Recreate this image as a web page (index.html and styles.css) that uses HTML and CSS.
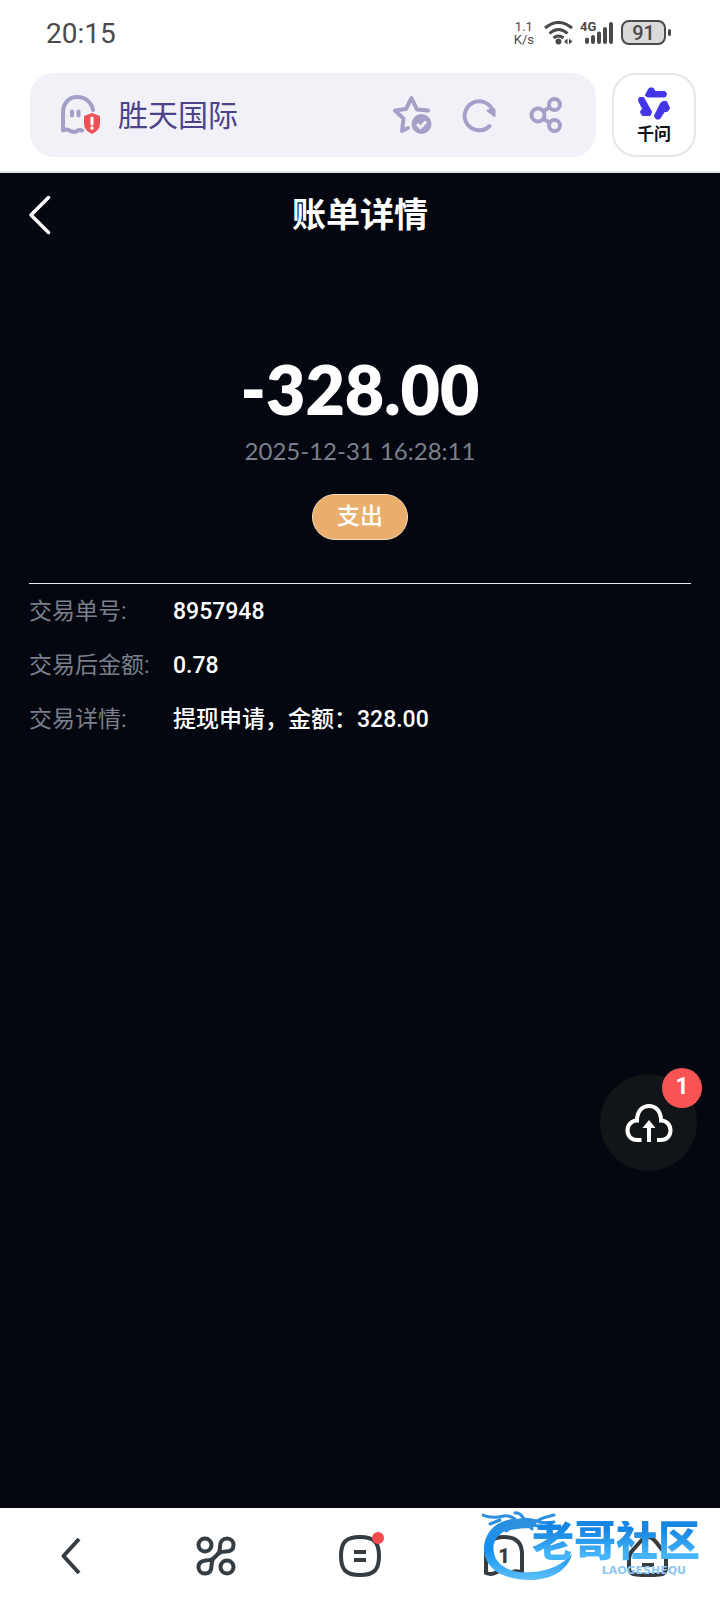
FILE: index.html
```html
<!DOCTYPE html>
<html lang="zh-CN">
<head>
<meta charset="utf-8">
<meta name="viewport" content="width=device-width, initial-scale=1">
<title>账单详情</title>
<link rel="stylesheet" href="styles.css">
</head>
<body>
<div class="status">
  <time class="clock">20:15</time>
  <div class="indicators">
    <div class="speed"><span>1.1</span><span>K/s</span></div>
    <svg class="wifi" width="30" height="24" viewBox="0 0 30 24" fill="none" stroke="#4a4a4a" stroke-width="3">
      <path d="M1 7Q14.500-4 28 7M5.500 12.500Q14.500 4.500 23.500 12.500M9.500 17Q14.500 13 19.500 17"/>
      <circle cx="14.500" cy="20.500" r="3" fill="#4a4a4a" stroke="none"/>
      <path d="M23.500 17.500v6l-3.500-3zM25 17.500v6l3.500-3z" fill="#4a4a4a" stroke="none"/>
    </svg>
    <div class="signal">
      <span class="net">4G</span>
      <svg width="34" height="24" viewBox="0 0 34 24" stroke="#4a4a4a" stroke-width="4" stroke-linecap="round">
        <path d="M7 18.500v2.500M13 16v5M19 12.500v8.500M25 8v13M31 3v18"/>
      </svg>
    </div>
    <div class="battery"><span class="level">91</span><span class="tip"></span></div>
  </div>
</div>

<header class="browser">
  <div class="address">
    <svg width="42" height="40" viewBox="0 0 42 40" fill="none">
      <path d="M34 15C32.500 7 26 2 18.500 2C9 2 4 9 4 18V35.500Q7 33.500 10.500 35.500Q15 38 18 36Q20 34.500 23 35.500" stroke="#a3a0c8" stroke-width="4" stroke-linecap="round" stroke-linejoin="round"/>
      <path d="M13 16.500v4M19.500 16.500v4" stroke="#a3a0c8" stroke-width="4" stroke-linecap="round"/>
      <path d="M33 18L41 21V29Q41 35 33 39Q25 35 25 29V21Z" fill="#ee5258"/>
      <path d="M33 23v6" stroke="#fff" stroke-width="3" stroke-linecap="round"/>
      <circle cx="33" cy="33" r="1.700" fill="#fff"/>
    </svg>
    <span class="site">胜天国际</span>
    <button class="tool" aria-label="收藏">
      <svg width="40" height="40" viewBox="0 0 40 40" fill="none">
        <path d="M36 15.500L25 14.500L19.500 3L14 14L3 15.500L11.500 23.500L10 36L16 33" stroke="#a5a0c8" stroke-width="4" stroke-linecap="round" stroke-linejoin="round"/>
        <circle cx="29.500" cy="29" r="10" fill="#a5a0c8"/>
        <path d="M25 29l3.500 3.500L34 26.500" stroke="#f2f1f8" stroke-width="3"/>
      </svg>
    </button>
    <button class="tool" aria-label="刷新">
      <svg width="40" height="40" viewBox="0 0 40 40" fill="none">
        <path d="M30.500 31A14.500 14.500 0 1 1 34 16.500" stroke="#a5a0c8" stroke-width="4" stroke-linecap="round"/>
        <path d="M28.500 15.500L35.500 14.500L35.500 21Z" fill="#a5a0c8" stroke="#a5a0c8" stroke-width="2" stroke-linejoin="round"/>
      </svg>
    </button>
    <button class="tool" aria-label="分享">
      <svg width="40" height="40" viewBox="0 0 40 40" fill="none" stroke="#a5a0c8" stroke-width="4">
        <circle cx="12" cy="20" r="6.500"/><circle cx="28.500" cy="9.500" r="5.500"/><circle cx="28.500" cy="30.500" r="5.500"/>
        <path d="M17.500 16l6-3.500M17.500 24l6 3.500"/>
      </svg>
    </button>
  </div>
  <button class="qianwen">
    <svg width="34" height="34" viewBox="0 0 34 34" fill="#4536e8" stroke="#4536e8" stroke-width="3" stroke-linejoin="round">
      <path d="M13 3L15.500 3L17.500 6.500H27.500L28.500 8L27.500 10H11L9.500 9Z"/>
      <path d="M3 12.500L6 12.500L13.500 26L12.500 28.500H6L4.500 26L7 23L2.500 14.500Z"/>
      <path d="M26.500 16.500L29 16.500L31.500 22L29.500 24.500H27L22 32H20L18.500 30L24.500 18Z"/>
    </svg>
    <span>千问</span>
  </button>
</header>

<main class="page">
  <div class="titlebar">
    <button class="back" aria-label="返回">
      <svg width="24" height="42" viewBox="0 0 24 42" fill="none" stroke="#fff" stroke-width="3.500" stroke-linecap="round" stroke-linejoin="round"><path d="M19.500 3.500L2 21L19.500 38.500"/></svg>
    </button>
    <h1 class="title">账单详情</h1>
  </div>
  <section class="summary">
    <p class="amount">-328.00</p>
    <time class="date">2025-12-31 16:28:11</time>
    <span class="kind">支出</span>
  </section>
  <dl class="details">
    <div class="row"><dt>交易单号:</dt><dd>8957948</dd></div>
    <div class="row"><dt>交易后金额:</dt><dd>0.78</dd></div>
    <div class="row"><dt>交易详情:</dt><dd>提现申请，金额：328.00</dd></div>
  </dl>
  <button class="upload" aria-label="上传">
    <svg width="48" height="40" viewBox="0 0 48 40" fill="none" stroke="#fff" stroke-width="4">
      <path d="M16.500 37H12C6.500 37 2.500 33 2.500 27.500C2.500 22 6.500 17.500 12 17.500C12 8.500 17 3 24 3C31 3 36 8.500 36 17.500C41.500 17.500 45.500 22 45.500 27.500C45.500 33 41.500 37 36 37H32"/>
      <path d="M24 39V24"/><path d="M24 17L30.500 25H17.500Z" fill="#fff" stroke="none"/>
    </svg>
    <span class="count">1</span>
  </button>
</main>

<nav class="bottom">
  <button class="item" aria-label="后退">
    <svg width="44" height="44" viewBox="0 0 44 44"><path d="M29 5L13.500 22L29 39"/></svg>
  </button>
  <button class="item" aria-label="应用">
    <svg width="44" height="44" viewBox="0 0 44 44">
      <circle cx="11" cy="11" r="6.500"/><circle cx="33" cy="33" r="6.500"/>
      <path d="M26 12C26 7.500 29 4.500 33 4.500C37 4.500 39.500 7.500 39.500 11C39.500 15 37 17.500 32 17.500C25 18 25 19 22 22C19 25 18 26 11.500 26.500C7 27 4.500 29 4.500 33C4.500 37 7.500 39.500 11 39.500C15 39.500 17.500 37 17.500 32C18 25 19 25 22 22C25 19 26 18 26 12Z"/>
    </svg>
  </button>
  <button class="item" aria-label="菜单">
    <svg width="44" height="44" viewBox="0 0 44 44"><path d="M22 3C36 3 41 8 41 22C41 36 36 41 22 41C8 41 3 36 3 22C3 8 8 3 22 3ZM16 18H28M16 26H28"/></svg>
    <span class="dot"></span>
  </button>
  <button class="item" aria-label="窗口">
    <svg width="44" height="44" viewBox="0 0 44 44"><path d="M4 39V20C4 8 11 3 22 3C33 3 40 8 40 20V39Q35 36 30 38.500Q26 41 22 38.500Q18 36 14 38.500Q9 41 4 39Z"/></svg>
    <span class="tabs">1</span>
  </button>
  <button class="item" aria-label="主页">
    <svg width="44" height="44" viewBox="0 0 44 44"><path d="M22 3Q18 3 14 8L6 17Q3 20 3 25V34Q3 40 10 40.500Q22 41.500 34 40.500Q40 40 40 34V25Q40 20 37 17L30 8Q26 3 22 3ZM16 31H28"/></svg>
  </button>
  <div class="watermark">
    <svg width="92" height="72" viewBox="0 0 92 72" fill="none">
      <defs><linearGradient id="blue" x1="0" y1="0" x2="0" y2="1"><stop offset="0" stop-color="#2c8fe0"/><stop offset=".5" stop-color="#1590ee"/><stop offset="1" stop-color="#5cc0fa"/></linearGradient></defs>
      <path d="M31 8C11 10 1 25 2 40C4 60 24 69 48 69C68 69 86 60 90 43C80 54 67 60 50 61C30 63 14 55 12 42C9 30 17 21 30 17Z" fill="url(#blue)"/>
      <path d="M0 4Q10 8 22 5Q28 4 33 8M33 2Q38 1 42 8M28 14Q38 5 54 10Q62 6 72 4M54 10Q62 13 72 11M36 15Q50 12 68 18M30 16L24 20M44 12L50 18M18 9L8 13" stroke="#2c8fe0" stroke-width="3" stroke-linecap="round"/>
      <path d="M26 10Q38 6 52 9Q58 14 50 17Q38 17 28 19Z" fill="#2c8fe0"/>
    </svg>
    <span class="brand">老哥社区</span>
    <span class="latin">LAOGESHEQU</span>
  </div>
</nav>
</body>
</html>
```

FILE: styles.css
```css
* { box-sizing: border-box; margin: 0; padding: 0; }

body {
  min-height: 100vh;
  display: flex;
  flex-direction: column;
  background: #fff;
  font-family: Roboto, "Noto Sans CJK SC", sans-serif;
}

button { border: 0; background: none; font: inherit; cursor: pointer; }
svg { display: block; flex: none; }

.status {
  height: 65px;
  padding: 0 49px 0 46px;
  display: flex;
  align-items: center;
  justify-content: space-between;
  color: #4a4a4a;
}
.clock { font-size: 28px; line-height: 32px; padding-top: 2px; }
.indicators { display: flex; align-items: center; }
.speed {
  display: flex;
  flex-direction: column;
  align-items: center;
  font-size: 13px;
  line-height: 13px;
  margin-right: 10px;
}
.signal { position: relative; margin: 0 7px 0 6px; }
.net {
  position: absolute;
  left: 0;
  top: -1px;
  font-size: 13px;
  line-height: 14px;
  font-weight: 700;
}
.battery { display: flex; align-items: center; gap: 2px; }
.level {
  width: 45px;
  height: 25px;
  border: 2px solid #4a4a4a;
  border-radius: 8px;
  background: #dadada;
  font-size: 20px;
  line-height: 22px;
  font-weight: 500;
  text-align: center;
}
.tip { width: 3px; height: 7px; border-radius: 2px; background: #4a4a4a; }

.browser {
  display: flex;
  gap: 16px;
  padding: 8px 24px 14px 30px;
  border-bottom: 2px solid #dfe3e6;
}
.address {
  flex: 1;
  height: 84px;
  border-radius: 24px;
  background: #f2f1f8;
  display: flex;
  align-items: center;
  padding: 0 30px 0 29px;
}
.site {
  flex: 1;
  margin-left: 17px;
  padding-top: 2px;
  color: #4c4389;
  font-size: 30px;
  line-height: 40px;
}
.tool { margin-left: 27px; }
.qianwen {
  width: 84px;
  height: 84px;
  border: 2px solid #e6e6ea;
  border-radius: 24px;
  display: flex;
  flex-direction: column;
  align-items: center;
  justify-content: center;
  color: #111;
  font-size: 17px;
  line-height: 20px;
  font-weight: 700;
  gap: 4px;
}

.page {
  flex: 1;
  position: relative;
  background: #04070f;
  color: #fff;
  padding: 0 29px;
}
.titlebar {
  height: 84px;
  display: grid;
  grid-template-columns: 24px 1fr 24px;
  align-items: center;
}
.title { font-size: 34px; line-height: 48px; font-weight: 700; text-align: center; }

.summary {
  display: flex;
  flex-direction: column;
  align-items: center;
  padding: 92px 0 43px;
  border-bottom: 1px solid #e8ebef;
}
.amount { font-family: Lato, sans-serif; font-size: 68px; line-height: 80px; font-weight: 800; }
.date { margin-top: 6px; font-family: Lato, sans-serif; font-size: 24px; line-height: 32px; color: #7b7f8b; }
.kind {
  margin-top: 27px;
  height: 46px;
  padding: 0 24px;
  border: 1px solid #f6dfc0;
  border-radius: 23px;
  background: #e9ae6b;
  font-size: 23px;
  line-height: 44px;
  font-weight: 500;
}

.details { display: flex; flex-direction: column; gap: 22px; padding-top: 12px; }
.row { display: flex; font-size: 23px; line-height: 32px; }
.row dt { width: 144px; color: #7b7f8b; }
.row dd { flex: 1; font-weight: 500; }

.upload {
  position: absolute;
  right: 23px;
  bottom: 337px;
  width: 97px;
  height: 97px;
  border-radius: 50%;
  background: #111518;
  display: flex;
  align-items: center;
  justify-content: center;
}
.count {
  position: absolute;
  top: -6px;
  right: -5px;
  width: 40px;
  height: 40px;
  border-radius: 50%;
  background: #f95353;
  color: #fff;
  font-size: 23px;
  line-height: 38px;
  font-weight: 700;
}

.bottom {
  position: relative;
  height: 96px;
  display: grid;
  grid-template-columns: repeat(5, 1fr);
  background: #fff;
}
.item { position: relative; display: flex; align-items: center; justify-content: center; }
.item svg { fill: none; stroke: #353d42; stroke-width: 4; stroke-linecap: butt; stroke-linejoin: round; }
.dot {
  position: absolute;
  left: 50%;
  top: 24px;
  margin-left: 12px;
  width: 12px;
  height: 12px;
  border-radius: 50%;
  background: #f44a4f;
}
.tabs { position: absolute; font-size: 20px; line-height: 24px; font-weight: 900; color: #353d42; }

.watermark { position: absolute; right: 16px; top: 3px; width: 222px; height: 76px; pointer-events: none; }
.brand {
  position: absolute;
  right: 4px;
  top: 10px;
  font-size: 42px;
  line-height: 42px;
  font-weight: 900;
  color: #2196f0;
  background: linear-gradient(#1686e4 20%, #45b4f8 80%);
  -webkit-background-clip: text;
  background-clip: text;
  -webkit-text-fill-color: transparent;
}
.latin {
  position: absolute;
  right: 18px;
  top: 54px;
  font-family: "DejaVu Sans", sans-serif;
  font-size: 11px;
  line-height: 12px;
  font-weight: 700;
  color: #8cc8f4;
}
```
